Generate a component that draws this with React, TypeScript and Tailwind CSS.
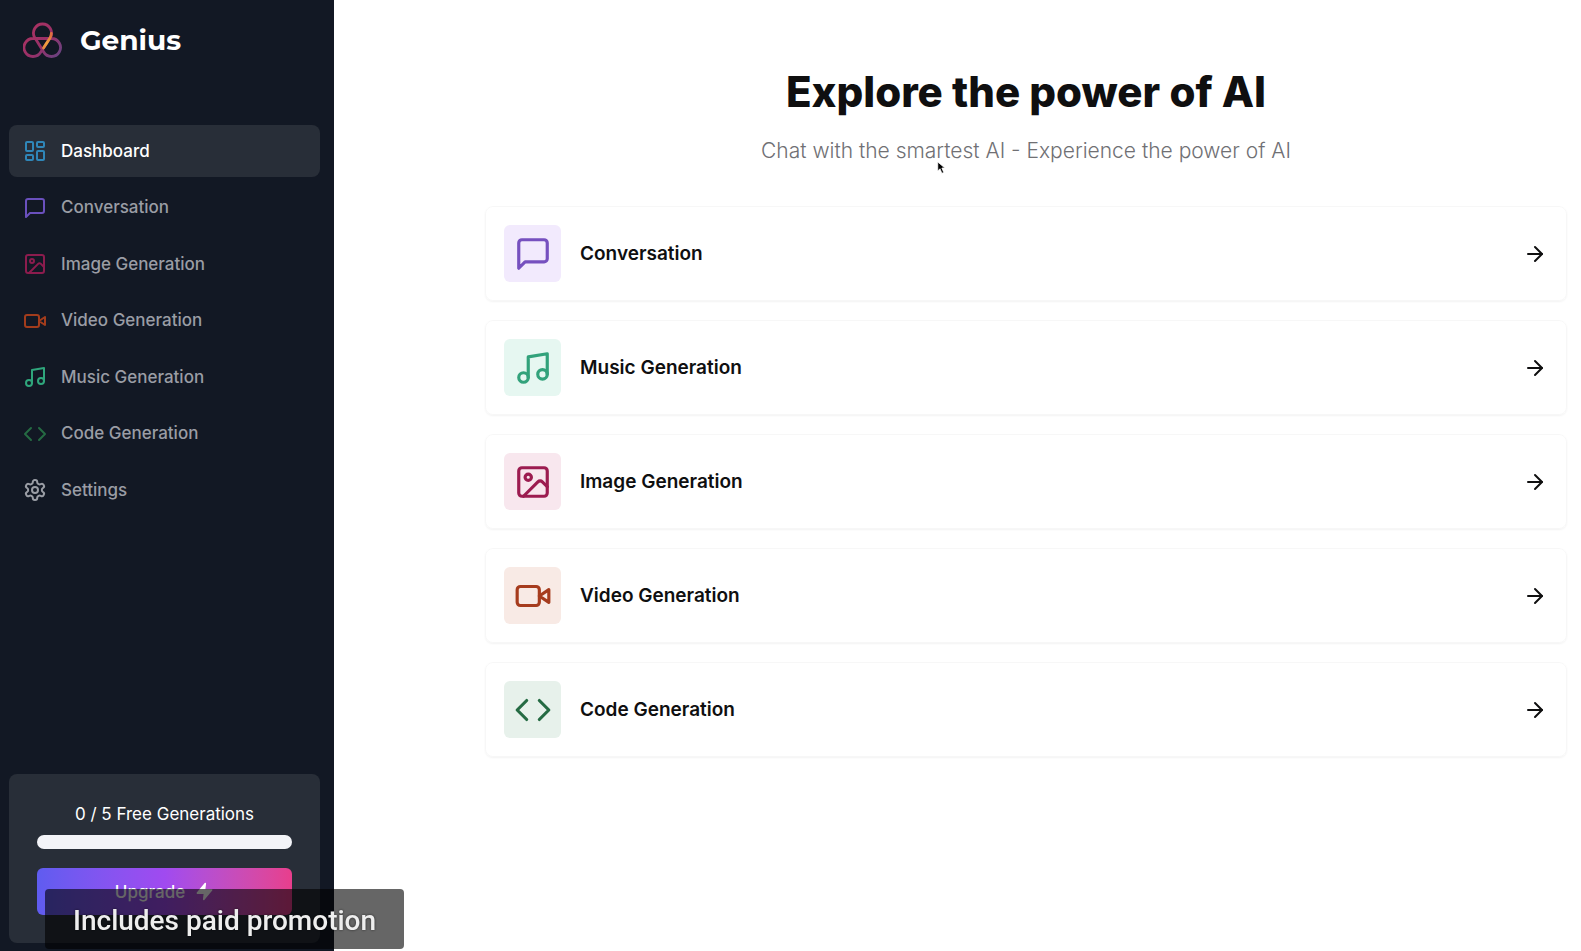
import React from "react";

type Shape = React.ReactNode;

const shapes: Record<string, Shape> = {
  dashboard: (
    <>
      <rect x="3" y="3" width="7" height="9" rx="1" />
      <rect x="14" y="3" width="7" height="5" rx="1" />
      <rect x="14" y="12" width="7" height="9" rx="1" />
      <rect x="3" y="16" width="7" height="5" rx="1" />
    </>
  ),
  message: <path d="M21 15a2 2 0 0 1-2 2H7l-4 4V5a2 2 0 0 1 2-2h14a2 2 0 0 1 2 2z" />,
  image: (
    <>
      <rect x="3" y="3" width="18" height="18" rx="2" />
      <circle cx="9" cy="9" r="2" />
      <path d="m21 15-3.086-3.086a2 2 0 0 0-2.828 0L6 21" />
    </>
  ),
  video: (
    <>
      <path d="m22 8-6 4 6 4V8Z" />
      <rect x="2" y="6" width="14" height="12" rx="2" />
    </>
  ),
  music: (
    <>
      <path d="M9 18V5l12-2v13" />
      <circle cx="6" cy="18" r="3" />
      <circle cx="18" cy="16" r="3" />
    </>
  ),
  code: (
    <>
      <polyline points="16 18 22 12 16 6" />
      <polyline points="8 6 2 12 8 18" />
    </>
  ),
  settings: (
    <>
      <path d="M12.22 2h-.44a2 2 0 0 0-2 2v.18a2 2 0 0 1-1 1.73l-.43.25a2 2 0 0 1-2 0l-.15-.08a2 2 0 0 0-2.73.73l-.22.38a2 2 0 0 0 .73 2.73l.15.1a2 2 0 0 1 1 1.72v.51a2 2 0 0 1-1 1.74l-.15.09a2 2 0 0 0-.73 2.73l.22.38a2 2 0 0 0 2.73.73l.15-.08a2 2 0 0 1 2 0l.43.25a2 2 0 0 1 1 1.73V20a2 2 0 0 0 2 2h.44a2 2 0 0 0 2-2v-.18a2 2 0 0 1 1-1.73l.43-.25a2 2 0 0 1 2 0l.15.08a2 2 0 0 0 2.73-.73l.22-.39a2 2 0 0 0-.73-2.73l-.15-.08a2 2 0 0 1-1-1.74v-.5a2 2 0 0 1 1-1.74l.15-.09a2 2 0 0 0 .73-2.73l-.22-.38a2 2 0 0 0-2.73-.73l-.15.08a2 2 0 0 1-2 0l-.43-.25a2 2 0 0 1-1-1.73V4a2 2 0 0 0-2-2z" />
      <circle cx="12" cy="12" r="3" />
    </>
  ),
  arrow: (
    <>
      <path d="M5 12h14" />
      <path d="m12 5 7 7-7 7" />
    </>
  ),
};

function Icon({ name, className }: { name: string; className: string }) {
  return (
    <svg viewBox="0 0 24 24" fill="none" stroke="currentColor" strokeWidth="2" strokeLinecap="round" strokeLinejoin="round" aria-hidden="true" className={className}>
      {shapes[name]}
    </svg>
  );
}

const routes = [
  { label: "Dashboard", icon: "dashboard", color: "text-[#2f86b8]", active: true },
  { label: "Conversation", icon: "message", color: "text-[#6a50bd]" },
  { label: "Image Generation", icon: "image", color: "text-[#8c1c4e]" },
  { label: "Video Generation", icon: "video", color: "text-[#a23c1c]" },
  { label: "Music Generation", icon: "music", color: "text-[#2fa67c]" },
  { label: "Code Generation", icon: "code", color: "text-[#256b43]" },
  { label: "Settings", icon: "settings", color: "text-[#9a9da5]" },
];

const tools = [
  { label: "Conversation", icon: "message", color: "text-[#7650bf]", bg: "bg-[#f2eafd]" },
  { label: "Music Generation", icon: "music", color: "text-[#32a27b]", bg: "bg-[#e6f7f1]" },
  { label: "Image Generation", icon: "image", color: "text-[#9c1c50]", bg: "bg-[#f8e7ee]" },
  { label: "Video Generation", icon: "video", color: "text-[#a63c1e]", bg: "bg-[#f8eae5]" },
  { label: "Code Generation", icon: "code", color: "text-[#256b43]", bg: "bg-[#e7f1eb]" },
];

function Logo() {
  return (
    <svg viewBox="0 0 40 38" fill="none" strokeWidth="2.8" strokeLinecap="round" strokeLinejoin="round" aria-hidden="true" className="h-[38px] w-10">
      <defs>
        <linearGradient id="ring" x1="0" y1="0" x2="40" y2="38" gradientUnits="userSpaceOnUse">
          <stop offset="0.2" stopColor="#a83262" />
          <stop offset="0.55" stopColor="#983068" />
          <stop offset="1" stopColor="#5c4787" />
        </linearGradient>
        <linearGradient id="strand" x1="27" y1="14" x2="19" y2="29" gradientUnits="userSpaceOnUse">
          <stop offset="0" stopColor="#e0703f" />
          <stop offset="0.5" stopColor="#f2a53c" />
          <stop offset="1" stopColor="#e0803f" />
        </linearGradient>
      </defs>
      <path
        d="M27.300 16.500L17.800 31A9 9 0 1 1 10 17.500H28.500A9 9 0 1 1 20.700 31L11.700 16.500A9 9 0 1 1 27.300 16.500Z"
        stroke="url(#ring)"
      />
      <path d="M28.300 12.500Q28.300 15 27 17L20.500 27" stroke="url(#strand)" />
    </svg>
  );
}

export default function App() {
  return (
    <div className="flex min-h-screen bg-white font-['Inter',sans-serif] text-[#0f0f10]">
      <aside className="flex w-[334px] shrink-0 flex-col bg-[#121824] pt-5 pr-[14px] pb-2 pl-[9px] text-white">
        <a href="#" className="flex h-10 items-center gap-[17px] pl-[14px]">
          <Logo />
          <span className="font-['Montserrat','Inter',sans-serif] text-[28px] font-bold">Genius</span>
        </a>
        <nav className="mt-[65px] flex h-[391px] flex-col justify-between">
          {routes.map((route) => (
            <a
              key={route.label}
              href="#"
              className={
                route.active
                  ? "flex h-[52px] items-center gap-[14px] rounded-lg bg-[#282e38] px-[14px] text-[17px] leading-[27px] font-medium text-white"
                  : "flex h-[52px] items-center gap-[14px] rounded-lg px-[14px] text-[17px] leading-[27px] font-medium text-[#9a9da5]"
              }
            >
              <Icon name={route.icon} className={`size-6 ${route.color}`} />
              {route.label}
            </a>
          ))}
        </nav>
        <section className="mt-auto rounded-lg bg-[#282e38] px-7 pt-7 pb-7">
          <p className="text-center text-[17px] leading-6">0 / 5 Free Generations</p>
          <div role="progressbar" aria-label="Free generations used" aria-valuenow={0} aria-valuemax={5} className="mt-[9px] h-[14px] rounded-full bg-[#f3f4f8]" />
          <button className="mt-[19px] flex h-[47px] w-full items-center justify-center gap-[10px] rounded-md bg-linear-to-r from-[#5f5cf0] via-[#a04af0] to-[#e83e8c] text-[17px] leading-7 font-medium">
            Upgrade
            <svg viewBox="0 0 24 24" fill="currentColor" stroke="currentColor" strokeWidth="2" strokeLinejoin="round" aria-hidden="true" className="size-[19px]">
              <polygon points="13 2 3 14 12 14 11 22 21 10 12 10 13 2" />
            </svg>
          </button>
        </section>
      </aside>

      <main className="min-w-0 flex-1 pt-[66px] pr-[14px] pl-[151px]">
        <h1 className="text-center text-[42px] leading-[52px] font-extrabold">Explore the power of AI</h1>
        <p className="mt-[19px] text-center text-[21px] leading-7 font-light text-[#707074]">Chat with the smartest AI - Experience the power of AI</p>
        <div className="mt-[41px] flex flex-col gap-[19px]">
          {tools.map((tool) => (
            <a key={tool.label} href="#" className="flex items-center gap-[19px] rounded-lg border border-black/3 py-[18px] pr-[19px] pl-[18px] shadow-[0_1px_2px_rgba(0,0,0,0.05)]">
              <span className={`flex size-[57px] items-center justify-center rounded-md ${tool.bg}`}>
                <Icon name={tool.icon} className={`size-[38px] ${tool.color}`} />
              </span>
              <span className="flex-1 text-[19px] leading-[29px] font-semibold">{tool.label}</span>
              <Icon name="arrow" className="size-6" />
            </a>
          ))}
        </div>
      </main>

      <svg viewBox="0 0 12 18" aria-hidden="true" className="absolute top-[161px] left-[937px] h-[14px] w-[9px]">
        <path d="M1 1v12l3-3 2.500 6 2.500-1-2.500-6h4z" fill="#000" stroke="#fff" strokeWidth="1" />
      </svg>
      <div className="fixed bottom-[2px] left-[45px] flex h-[60px] items-center rounded-sm bg-black/60 px-7 pt-1 font-['Roboto',sans-serif] text-[28px] font-medium text-[#eeeeee] [text-shadow:0_0_3px_rgba(0,0,0,0.6)]">
        Includes paid promotion
      </div>
    </div>
  );
}
